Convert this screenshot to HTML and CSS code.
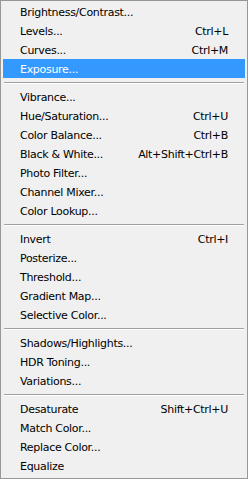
FILE: index.html
```html
<!DOCTYPE html>
<html lang="en">
<head>
    <meta charset="UTF-8">
    <title>Adjustments</title>
    <link rel="stylesheet" href="styles.css">
</head>
<body>

<div class="menu">
    <div class="item"><span>Brightness/Contrast...</span></div>
    <div class="item"><span>Levels...</span><span class="key">Ctrl+L</span></div>
    <div class="item"><span>Curves...</span><span class="key">Ctrl+M</span></div>
    <div class="item active"><span>Exposure...</span></div>
    <div class="sep"></div>

    <div class="item"><span>Vibrance...</span></div>
    <div class="item"><span>Hue/Saturation...</span><span class="key">Ctrl+U</span></div>
    <div class="item"><span>Color Balance...</span><span class="key">Ctrl+B</span></div>
    <div class="item"><span>Black &amp; White...</span><span class="key">Alt+Shift+Ctrl+B</span></div>
    <div class="item"><span>Photo Filter...</span></div>
    <div class="item"><span>Channel Mixer...</span></div>
    <div class="item"><span>Color Lookup...</span></div>
    <div class="sep"></div>

    <div class="item"><span>Invert</span><span class="key">Ctrl+I</span></div>
    <div class="item"><span>Posterize...</span></div>
    <div class="item"><span>Threshold...</span></div>
    <div class="item"><span>Gradient Map...</span></div>
    <div class="item"><span>Selective Color...</span></div>
    <div class="sep"></div>

    <div class="item"><span>Shadows/Highlights...</span></div>
    <div class="item"><span>HDR Toning...</span></div>
    <div class="item"><span>Variations...</span></div>
    <div class="sep"></div>

    <div class="item"><span>Desaturate</span><span class="key">Shift+Ctrl+U</span></div>
    <div class="item"><span>Match Color...</span></div>
    <div class="item"><span>Replace Color...</span></div>
    <div class="item"><span>Equalize</span></div>
</div>

</body>
</html>
```

FILE: styles.css
```css
body {
    margin: 0;
    padding: 0;
    background-color: #f0f0f0;
    font-family: "DejaVu Sans", sans-serif;
    font-size: 11px;
}

.menu {
    width: 248px;
    height: 479px;
    box-sizing: border-box;
    border: 1px solid #979797;
    background-color: #f0f0f0;
    padding: 1px 2px 3px 2px;
}

.item {
    display: flex;
    justify-content: space-between;
    align-items: center;
    height: 19px;
    box-sizing: border-box;
    padding: 1px 17px 0 17px;
    color: #000;
    letter-spacing: -0.3px;
    white-space: nowrap;
}

.item.active {
    background-color: #3399ff;
    color: white;
}

.sep {
    height: 9px;
    box-sizing: border-box;
    padding-top: 4px;
}

.sep::before {
    content: "";
    display: block;
    margin: 0 1px;
    border-top: 1px solid #a0a0a0;
    border-bottom: 1px solid #ffffff;
}
```
